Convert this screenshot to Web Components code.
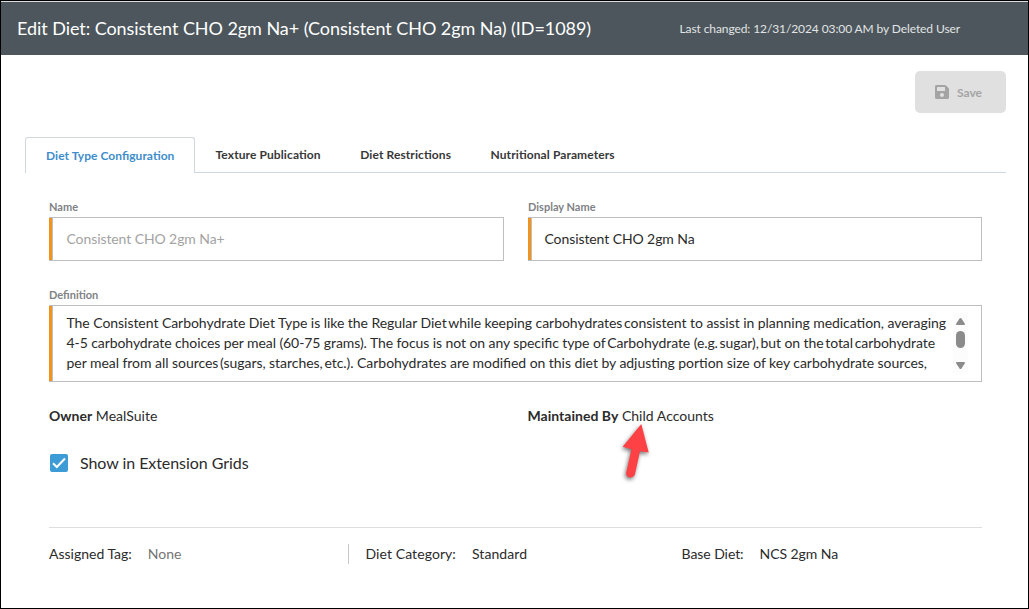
<!DOCTYPE html>
<html lang="en">
<head>
<meta charset="utf-8">
<title>Edit Diet</title>
<style>
  body {
    margin: 0;
    font-family: Lato, "Liberation Sans", sans-serif;
    font-size: 14px;
    font-feature-settings: "liga" 1;
    color: #2b2b2b;
  }
</style>
</head>
<body>
<diet-editor></diet-editor>

<script>
// Small helper: open shadow root filled with the given markup
class BaseElement extends HTMLElement {
  constructor() {
    super();
    this.attachShadow({ mode: 'open' });
    this.shadowRoot.innerHTML = this.render();
  }

  render() {
    return '<slot></slot>';
  }
}

class PageHeader extends BaseElement {
  render() {
    return `
      <style>
        :host {
          display: flex;
          align-items: center;
          box-sizing: border-box;
          height: 54px;
          padding: 0 68px 0 16px;
          border-top: 1px solid #dcdfe0;
          background: #4c565c;
          justify-content: space-between;
          white-space: nowrap;
        }
        .title { padding-bottom: 2px; color: #fff; font-size: 18px; letter-spacing: -.06px; }
        .meta { color: #e2e4e5; font-size: 12px; letter-spacing: -.1px; }
      </style>
      <div class="title"><slot></slot></div>
      <div class="meta"><slot name="meta"></slot></div>
    `;
  }
}

class SaveButton extends BaseElement {
  render() {
    return `
      <style>
        :host {
          display: flex;
          align-items: center;
          box-sizing: border-box;
          gap: 8px;
          width: 91px;
          height: 42px;
          padding: 0 20px;
          border-radius: 5px;
          background: #e0e0e0;
          color: #a4a4a4;
          font-size: 12px;
          font-weight: bold;
        }
        svg { display: block; width: 14px; height: 14px; fill: currentColor; }
      </style>
      <svg viewBox="0 32 448 448"><path d="M433.941 129.941l-83.882-83.882A48 48 0 0 0 316.118 32H48C21.49 32 0 53.49 0 80v352c0 26.51 21.49 48 48 48h352c26.51 0 48-21.49 48-48V163.882a48 48 0 0 0-14.059-33.941zM224 416c-35.346 0-64-28.654-64-64s28.654-64 64-64 64 28.654 64 64-28.654 64-64 64zm96-304.52V212c0 6.627-5.373 12-12 12H76c-6.627 0-12-5.373-12-12V108c0-6.627 5.373-12 12-12h228.52c3.183 0 6.235 1.264 8.485 3.515l3.48 3.48A11.996 11.996 0 0 1 320 111.48z"/></svg>
      <span><slot></slot></span>
    `;
  }
}

class TabBar extends BaseElement {
  render() {
    return `
      <style>
        :host {
          display: flex;
          box-sizing: border-box;
          height: 36px;
          background: linear-gradient(#d0d7dd, #d0d7dd) 0 100% / 100% 1px no-repeat;
        }
      </style>
      <slot></slot>
    `;
  }
}

class TabItem extends BaseElement {
  render() {
    return `
      <style>
        :host {
          box-sizing: border-box;
          padding: 9px 19px 0 20.5px;
          font-size: 12px;
          line-height: 18px;
          font-weight: bold;
          letter-spacing: .1px;
          color: #383838;
          white-space: nowrap;
        }
        :host([active]) {
          width: 170px;
          padding-left: 20px;
          border: 1px solid #d0d7dd;
          border-bottom: 0;
          border-radius: 3px 3px 0 0;
          background: #fff;
          letter-spacing: .04px;
          color: #3e8dcb;
        }
      </style>
      <slot></slot>
    `;
  }
}

class FormField extends BaseElement {
  render() {
    return `
      <style>
        :host { display: block; }
        .label {
          height: 14px;
          margin-bottom: 3px;
          font-size: 11px;
          line-height: 14px;
          font-weight: bold;
          color: #808285;
        }
        .box {
          display: flex;
          align-items: center;
          box-sizing: border-box;
          height: var(--box-height, 44px);
          padding: 0 0 2px var(--text-indent, 17.5px);
          border: 1px solid #bdbfc0;
          border-left: 0;
          background: linear-gradient(90deg, #f1931d 3px, #bdbfc0 3px 4px, transparent 4px) border-box;
          letter-spacing: var(--text-spacing, -.09px);
          white-space: nowrap;
        }
        :host([disabled]) .box { color: #a3a3a3; }
      </style>
      <div class="label"><slot name="label"></slot></div>
      <div class="box"><slot></slot></div>
    `;
  }
}

class TextScroller extends BaseElement {
  render() {
    return `
      <style>
        :host { display: flex; flex: 1; justify-content: space-between; padding-right: 13px; line-height: 20px; }
        .text { width: 880px; }
        .bar { width: 15px; height: 60px; background: #fcfcfc; }
        svg { display: block; fill: #8b8b8b; }
      </style>
      <div class="text"><slot></slot></div>
      <div class="bar">
        <svg width="15" height="60" viewBox="0 0 15 60">
          <path d="M6.5 5.5Q7.5 4.5 8.5 5.5L12 11Q12.200 12 11 12H4Q2.800 12 3 11Z"/>
          <rect x="3" y="18" width="9" height="17" rx="4.500"/>
          <path d="M6.500 55.500Q7.500 56.500 8.500 55.500L12 50Q12.200 49 11 49H4Q2.800 49 3 50Z"/>
        </svg>
      </div>
    `;
  }
}

class TextLine extends BaseElement {
  render() {
    return `
      <style>:host { display: block; }</style>
      <slot></slot>
    `;
  }
}

class CheckOption extends BaseElement {
  render() {
    return `
      <style>
        :host { display: flex; align-items: center; gap: 12px; padding-left: 1px; font-size: 16px; line-height: 20px; letter-spacing: -.06px; }
        svg { display: block; }
      </style>
      <svg width="18" height="18" viewBox="0 0 18 18">
        <rect width="18" height="18" rx="2" fill="#3d9bd5"/>
        <path d="M3 9.300L6.800 13L15 4.500" fill="none" stroke="#fff" stroke-width="2"/>
      </svg>
      <span><slot></slot></span>
    `;
  }
}

class DetailItem extends BaseElement {
  render() {
    return `
      <style>
        :host { display: flex; box-sizing: border-box; gap: 16px; height: 20px; line-height: 20px; white-space: nowrap; }
        :host([divided]) { padding-left: 16.5px; border-left: 1px solid #c6c6c6; letter-spacing: .08px; }
        :host([muted]) .value { color: #757575; }
      </style>
      <span><slot name="label"></slot></span>
      <span class="value"><slot></slot></span>
    `;
  }
}

class PointerArrow extends BaseElement {
  render() {
    return `
      <style>
        :host { position: absolute; }
        svg { display: block; filter: drop-shadow(-1px 2px 2px rgba(0, 0, 0, .55)); }
      </style>
      <svg width="40" height="66" viewBox="616 420 40 66">
        <path fill="#fe4144" d="M641.300 424L648.700 452.600L640 451.200L635 474C633.800 479.500 625 478 626.200 472.500L631.500 449.300L622.700 446.700Z"/>
      </svg>
    `;
  }
}

class DietEditor extends BaseElement {
  render() {
    return `
      <style>
        :host {
          display: block;
          position: relative;
          box-sizing: border-box;
          width: 1029px;
          height: 609px;
          border: 1px solid #000;
          background: #fff;
          overflow: hidden;
        }
        .actions { display: flex; justify-content: flex-end; padding: 16px 22px 24px 0; }
        tab-bar { margin: 0 22px 0 24px; }
        .content { margin: 27px 46px 0 48px; }
        .columns { display: grid; grid-template-columns: 455px 454px; column-gap: 24px; }
        .display { --text-indent: 16.500px; }
        .definition { --box-height: 77px; --text-spacing: -.045px; margin-top: 27px; }
        .definition .tight { letter-spacing: -.08px; }
        .k { word-spacing: -1.800px; }
        .owners { grid-template-columns: 454.500px 454px; margin-top: 24px; line-height: 20px; letter-spacing: .02px; }
        .grids { margin-top: 27px; }
        .details {
          display: grid;
          grid-template-columns: 299px 333.500px 1fr;
          margin-top: 54px;
          padding-top: 16px;
          border-top: 1px solid #dedede;
        }
        .base { letter-spacing: -.06px; }
        pointer-arrow { left: 615px; top: 419px; }
      </style>
      <page-header>
        Edit Diet: Consistent CHO 2gm Na+ (Consistent CHO 2gm Na) (ID=1089)
        <span slot="meta">Last changed: 12/31/2024 03:00 AM by Deleted User</span>
      </page-header>
      <div class="actions"><save-button>Save</save-button></div>
      <tab-bar>
        <tab-item active>Diet Type Configuration</tab-item>
        <tab-item>Texture Publication</tab-item>
        <tab-item>Diet Restrictions</tab-item>
        <tab-item>Nutritional Parameters</tab-item>
      </tab-bar>
      <div class="content">
        <div class="columns">
          <form-field disabled><span slot="label">Name</span>Consistent CHO 2gm Na+</form-field>
          <form-field class="display"><span slot="label">Display Name</span>Consistent CHO 2gm Na</form-field>
        </div>
        <form-field class="definition">
          <span slot="label">Definition</span>
          <text-scroller>
            <text-line>The Consistent Carbohydrate Diet Type is like the Regular Diet<span class="k"> </span>while keeping carbohydrates<span class="k"> </span>consistent to assist in planning medication, averaging</text-line>
            <text-line class="tight">4-5 carbohydrate choices per meal (60-75 grams). The focus is not on any specific type of<span class="k"> </span>Carbohydrate (e.g.<span class="k"> </span>sugar),<span class="k"> </span>but on the<span class="k"> </span>total<span class="k"> </span>carbohydrate</text-line>
            <text-line>per meal from all sources<span class="k"> </span>(sugars, starches,<span class="k"> </span>etc.). Carbohydrates are modified on this diet by adjusting portion size of key carbohydrate sources,</text-line>
          </text-scroller>
        </form-field>
        <div class="columns owners">
          <div><b>Owner</b> MealSuite</div>
          <div><b>Maintained By</b> Child Accounts</div>
        </div>
        <check-option class="grids">Show in Extension Grids</check-option>
        <div class="details">
          <detail-item muted><span slot="label">Assigned Tag:</span>None</detail-item>
          <detail-item divided><span slot="label">Diet Category:</span>Standard</detail-item>
          <detail-item class="base"><span slot="label">Base Diet:</span>NCS 2gm Na</detail-item>
        </div>
      </div>
      <pointer-arrow></pointer-arrow>
    `;
  }
}

customElements.define('page-header', PageHeader);
customElements.define('save-button', SaveButton);
customElements.define('tab-bar', TabBar);
customElements.define('tab-item', TabItem);
customElements.define('form-field', FormField);
customElements.define('text-scroller', TextScroller);
customElements.define('text-line', TextLine);
customElements.define('check-option', CheckOption);
customElements.define('detail-item', DetailItem);
customElements.define('pointer-arrow', PointerArrow);
customElements.define('diet-editor', DietEditor);
</script>
</body>
</html>
